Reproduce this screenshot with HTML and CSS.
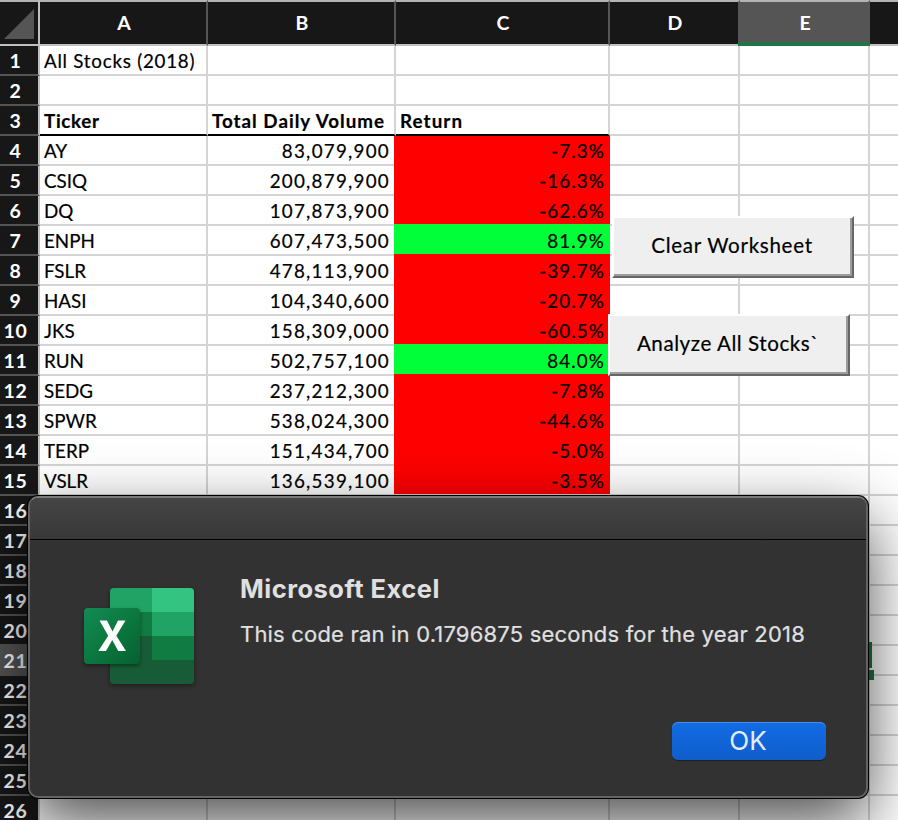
FILE: index.html
```html
<!DOCTYPE html>
<html lang="en">
<head>
<meta charset="utf-8">
<title>All Stocks (2018)</title>
<link rel="stylesheet" href="styles.css">
</head>
<body>
<main class="sheet">
<table class="grid">
<colgroup><col class="c-num"><col class="c-a"><col class="c-b"><col class="c-c"><col class="c-d"><col class="c-e"><col class="c-f"></colgroup>
<thead>
<tr><th class="corner"><svg width="30" height="30" viewBox="0 0 30 30"><path d="M30 0V30H0Z" fill="#555"/></svg></th><th>A</th><th>B</th><th>C</th><th>D</th><th class="selected">E</th><th></th></tr>
</thead>
<tbody>
<tr><th>1</th><td class="title">All Stocks (2018)</td><td></td><td></td><td></td><td></td><td></td></tr>
<tr><th>2</th><td></td><td></td><td></td><td></td><td></td><td></td></tr>
<tr class="heads"><th>3</th><td class="tick">Ticker</td><td class="vol">Total Daily Volume</td><td>Return</td><td></td><td></td><td></td></tr>
<tr class="first"><th>4</th><td>AY</td><td class="n">83,079,900</td><td class="n"><div class="fill down">-7.3%</div></td><td></td><td></td><td></td></tr>
<tr><th>5</th><td>CSIQ</td><td class="n">200,879,900</td><td class="n"><div class="fill down">-16.3%</div></td><td></td><td></td><td></td></tr>
<tr><th>6</th><td>DQ</td><td class="n">107,873,900</td><td class="n"><div class="fill down">-62.6%</div></td><td></td><td></td><td></td></tr>
<tr><th>7</th><td>ENPH</td><td class="n">607,473,500</td><td class="n"><div class="fill up">81.9%</div></td><td></td><td></td><td></td></tr>
<tr><th>8</th><td>FSLR</td><td class="n">478,113,900</td><td class="n"><div class="fill down">-39.7%</div></td><td></td><td></td><td></td></tr>
<tr><th>9</th><td>HASI</td><td class="n">104,340,600</td><td class="n"><div class="fill down">-20.7%</div></td><td></td><td></td><td></td></tr>
<tr><th>10</th><td>JKS</td><td class="n">158,309,000</td><td class="n"><div class="fill down">-60.5%</div></td><td></td><td></td><td></td></tr>
<tr><th>11</th><td>RUN</td><td class="n">502,757,100</td><td class="n"><div class="fill up">84.0%</div></td><td></td><td></td><td></td></tr>
<tr><th>12</th><td>SEDG</td><td class="n">237,212,300</td><td class="n"><div class="fill down">-7.8%</div></td><td></td><td></td><td></td></tr>
<tr><th>13</th><td>SPWR</td><td class="n">538,024,300</td><td class="n"><div class="fill down">-44.6%</div></td><td></td><td></td><td></td></tr>
<tr><th>14</th><td>TERP</td><td class="n">151,434,700</td><td class="n"><div class="fill down">-5.0%</div></td><td></td><td></td><td></td></tr>
<tr><th>15</th><td>VSLR</td><td class="n">136,539,100</td><td class="n"><div class="fill down">-3.5%</div></td><td></td><td></td><td></td></tr>
<tr><th>16</th><td></td><td></td><td></td><td></td><td></td><td></td></tr>
<tr><th>17</th><td></td><td></td><td></td><td></td><td></td><td></td></tr>
<tr><th>18</th><td></td><td></td><td></td><td></td><td></td><td></td></tr>
<tr><th>19</th><td></td><td></td><td></td><td></td><td></td><td></td></tr>
<tr class="before-active"><th>20</th><td></td><td></td><td></td><td></td><td></td><td></td></tr>
<tr class="active"><th>21</th><td></td><td></td><td></td><td></td><td class="cursor"></td><td></td></tr>
<tr><th>22</th><td></td><td></td><td></td><td></td><td></td><td></td></tr>
<tr><th>23</th><td></td><td></td><td></td><td></td><td></td><td></td></tr>
<tr><th>24</th><td></td><td></td><td></td><td></td><td></td><td></td></tr>
<tr><th>25</th><td></td><td></td><td></td><td></td><td></td><td></td></tr>
<tr class="last"><th>26</th><td></td><td></td><td></td><td></td><td></td><td></td></tr>
</tbody>
</table>
<button class="macro clear">Clear Worksheet</button>
<button class="macro analyze">Analyze All Stocks`</button>
<section class="dialog" role="dialog">
<div class="titlebar"></div>
<div class="content">
<svg class="logo" width="124" height="112" viewBox="0 0 124 112">
<defs>
<linearGradient id="tile" x1="0" y1="0" x2="1" y2="1"><stop offset="0" stop-color="#148a55"/><stop offset=".5" stop-color="#0b783f"/><stop offset="1" stop-color="#066032"/></linearGradient>
<clipPath id="book"><rect x="32" y="6" width="84" height="96" rx="4"/></clipPath>
<filter id="soft" x="-30%" y="-30%" width="160%" height="160%" color-interpolation-filters="sRGB"><feDropShadow dx="0" dy="2" stdDeviation="2" flood-opacity=".4"/></filter>
</defs>
<g filter="url(#soft)"><g clip-path="url(#book)">
<rect x="32" y="6" width="84" height="96" fill="#185c37"/>
<rect x="32" y="6" width="42" height="24" fill="#21a366"/>
<rect x="74" y="6" width="42" height="24" fill="#33c481"/>
<rect x="32" y="30" width="42" height="24" fill="#107c41"/>
<rect x="74" y="30" width="42" height="24" fill="#21a366"/>
<rect x="74" y="54" width="42" height="24" fill="#107c41"/>
</g></g>
<rect x="6" y="26" width="56" height="56" rx="4" fill="url(#tile)" filter="url(#soft)"/>
<path d="M21.500 38.500H29L34.500 49.500L40 38.500H47.500L38.300 53.800L48 69H40.200L34.200 58L28 69H20.300L30.200 53.800Z" fill="#fff"/>
</svg>
<div class="message">
<h1>Microsoft Excel</h1>
<p>This code ran in 0.1796875 seconds for the year 2018</p>
</div>
</div>
<div class="actions"><button class="ok">OK</button></div>
</section>
</main>
</body>
</html>
```
FILE: styles.css
```css
* { box-sizing: border-box; }
body { margin: 0; background: #fff; overflow: hidden; }
.sheet { position: relative; width: 898px; height: 820px; overflow: hidden; font-family: Lato, "Liberation Sans", sans-serif; font-size: 18.8px; color: #000; }

.grid { width: 1000px; table-layout: fixed; border-collapse: separate; border-spacing: 0; }
.c-num { width: 40px; }
.c-a { width: 168px; }
.c-b { width: 188px; }
.c-c { width: 214px; }
.c-d, .c-e, .c-f { width: 130px; }

td, th { padding: 0; white-space: nowrap; }
td { height: 30px; padding: 2px 5px 0 4px; border-right: 2px solid #d4d4d4; border-bottom: 2px solid #d4d4d4; line-height: 26px; vertical-align: top; -webkit-text-stroke: .2px; }
th { background: #171717; color: #fff; font-weight: 700; }

thead th { position: relative; height: 46px; padding-left: 2px; border-top: 2px solid #b4b4b4; border-bottom: 2px solid #c0c0c0; border-right: 2px solid #555; line-height: 42px; font-size: 19.500px; }
thead th.corner { padding: 0; border-right-color: #c0c0c0; }
.corner svg { display: block; margin: 2px 0 0 4px; }
thead th.selected { background: #555; }
.selected::after { content: ""; position: absolute; left: -2px; right: -2px; bottom: -2px; height: 4px; background: #1f7548; }

tbody th { height: 30px; padding: 2px 7px 0 0; border-right: 2px solid #c0c0c0; border-bottom: 2px solid #555; line-height: 26px; text-align: center; font-size: 19.500px; letter-spacing: .6px; vertical-align: top; }
.active th { background: #555; }
.last th { line-height: 24px; padding-top: 3px; }

.title { letter-spacing: .75px; }
.heads td { font-weight: 700; letter-spacing: 1.1px; }
.heads td:nth-child(-n+4) { border-bottom-color: #000; }
.heads .tick { letter-spacing: .7px; }
.heads .vol { letter-spacing: 1px; }
.n { text-align: right; letter-spacing: 1.25px; padding-right: 4px; }
td:has(.fill) { padding: 0; letter-spacing: 1.1px; }
.fill { position: relative; width: 216px; height: 30px; margin: -2px 0 0 -2px; padding: 4px 5px 0 0; }
.first .fill { height: 28px; margin-top: 0; padding-top: 2px; }
.down { background: #f00; }
.up { background: #00ff38; }

.cursor { position: relative; }
.cursor::before, .cursor::after { content: ""; position: absolute; background: #1f7548; }
.cursor::before { right: -4px; top: -4px; width: 4px; height: 26px; }
.cursor::after { right: -6px; top: 24px; width: 8px; height: 10px; }

.macro { position: absolute; width: 242px; height: 62px; padding: 0 2px 5px 0; border: 2px solid; border-color: #fff #666 #666 #fff; background: #efefef; box-shadow: inset -2px -2px #9c9c9c; font: 20.600px Lato, sans-serif; letter-spacing: .7px; color: #000; white-space: nowrap; -webkit-text-stroke: .2px; }
.clear { left: 612px; top: 216px; }
.analyze { left: 608px; top: 314px; letter-spacing: .55px; }

.dialog { position: absolute; left: 28px; top: 496px; width: 840px; height: 302px; border: 2px solid #636363; border-top-color: #7b7b7b; border-radius: 10px; background: #323232; box-shadow: 0 0 0 1px #000, 0 24px 64px rgba(0, 0, 0, .7); font-family: Inter, sans-serif; color: #e0e0e0; display: flex; flex-direction: column; overflow: hidden; }
.titlebar { height: 42px; flex: none; background: linear-gradient(#454545, #383838); border-bottom: 1px solid #000; }
.content { display: flex; padding: 42px 0 0 48px; height: 140px; }
.logo { flex: none; }
.message { margin-left: 38px; white-space: nowrap; }
h1 { margin: -9px 0 0; font-size: 25.500px; line-height: 32px; font-weight: 700; letter-spacing: .5px; }
p { margin: 14px 0 0; font-size: 22px; line-height: 30px; letter-spacing: .19px; -webkit-text-stroke: .2px; }
.actions { display: flex; justify-content: flex-end; padding: 42px 40px 0 0; }
.ok { width: 154px; height: 38px; padding: 0 2px 1px 0; border: 0; border-radius: 6px; background: linear-gradient(#126ce4, #0f5dcb); box-shadow: inset 0 1px #4a8ee9, 0 1px 1px rgba(0, 0, 0, .4); font: 26px Inter, sans-serif; color: #e2ecfb; }
```
